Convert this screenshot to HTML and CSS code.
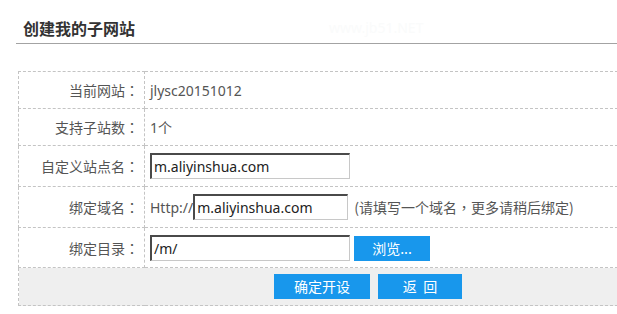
FILE: index.html
```html
<!DOCTYPE html>
<html lang="zh-CN">
<head>
<meta charset="utf-8">
<title>创建我的子网站</title>
<link rel="stylesheet" href="styles.css">
</head>
<body>
<div class="header">
  <h1 class="title">创建我的子网站</h1>
  <span class="watermark">www.jb51.NET</span>
</div>
<table class="form-table">
  <tr class="r1">
    <td class="label">当前网站<span class="punct" lang="zh-TW">：</span></td>
    <td class="value">jlysc20151012</td>
  </tr>
  <tr class="r1">
    <td class="label">支持子站数<span class="punct" lang="zh-TW">：</span></td>
    <td class="value">1个</td>
  </tr>
  <tr class="r2">
    <td class="label">自定义站点名<span class="punct" lang="zh-TW">：</span></td>
    <td class="value"><input class="text-input" type="text" value="m.aliyinshua.com"></td>
  </tr>
  <tr class="r2">
    <td class="label">绑定域名<span class="punct" lang="zh-TW">：</span></td>
    <td class="value"><span class="prefix">Http://</span><input class="text-input short" type="text" value="m.aliyinshua.com"><span class="hint">(请填写一个域名<span class="punct" lang="zh-TW">，</span>更多请稍后绑定)</span></td>
  </tr>
  <tr class="r3">
    <td class="label">绑定目录<span class="punct" lang="zh-TW">：</span></td>
    <td class="value"><input class="text-input" type="text" value="/m/"><button class="btn browse" type="button">浏览...</button></td>
  </tr>
  <tr class="r4">
    <td class="actions" colspan="2"><button class="btn submit" type="button">确定开设</button><button class="btn back" type="button">返&nbsp;&nbsp;回</button></td>
  </tr>
</table>
</body>
</html>
```
FILE: styles.css
```css
html, body {
  margin: 0;
  padding: 0;
  overflow: hidden;
  background: #fff;
}
body {
  font-family: "Noto Sans", "Noto Sans CJK SC", sans-serif;
  color: #555;
  width: 617px;
}
.header {
  margin-left: 16px;
  height: 44px;
  box-sizing: border-box;
  padding: 16px 0 0 7px;
  border-bottom: 1px solid #a3a3a3;
  display: flex;
  align-items: flex-start;
}
.title {
  margin: 0;
  font-size: 16px;
  line-height: 24px;
  font-weight: bold;
  color: #333;
  font-family: "Noto Sans CJK SC", sans-serif;
}
.watermark {
  margin-left: 194px;
  font-size: 14px;
  line-height: 24px;
  color: #fafbfb;
}
.form-table {
  margin: 27px 0 0 18px;
  width: 700px;
  border-collapse: collapse;
}
.form-table td {
  border: 1px dashed #c4c4c4;
  padding: 0;
}
.r1 td { height: 36px; }
.r2 td { height: 40px; }
.r3 td { height: 39px; }
.r4 td { height: 37px; }
.label {
  width: 120px;
  padding-right: 5px !important;
  text-align: right;
  font-size: 14px;
  font-family: "Noto Sans CJK SC", sans-serif;
  color: #555;
  white-space: nowrap;
}
.punct {
  font-family: "Noto Sans CJK TC", sans-serif;
}
.value {
  padding-left: 5px !important;
  font-size: 14px;
  color: #555;
  white-space: nowrap;
}
.value > * {
  vertical-align: middle;
}
.text-input {
  width: 200px;
  height: 26px;
  box-sizing: border-box;
  margin: 0;
  padding: 0 0 0 2px;
  border-style: solid;
  border-width: 2px 1px 1px 2px;
  border-color: #4a4a4a #c8c8c8 #c8c8c8 #4a4a4a;
  font-family: "Noto Sans", sans-serif;
  font-size: 14px;
  color: #222;
  background: #fff;
}
.text-input.short {
  width: 155px;
}
.prefix {
  font-size: 14px;
}
.hint {
  margin-left: 6px;
  font-size: 14px;
  font-family: "Noto Sans CJK SC", sans-serif;
}
.btn {
  border: 0;
  margin: 0;
  padding: 0;
  background: #1897ec;
  color: #fff;
  font-family: "Noto Sans CJK SC", sans-serif;
  font-size: 14px;
  height: 25px;
  line-height: 25px;
}
.browse {
  width: 76px;
  margin-left: 4px;
  margin-top: 2px;
}
.actions {
  background: #efefef;
  text-align: center;
  font-size: 0;
}
.submit {
  width: 96px;
}
.back {
  width: 84px;
  margin-left: 8px;
}
```
